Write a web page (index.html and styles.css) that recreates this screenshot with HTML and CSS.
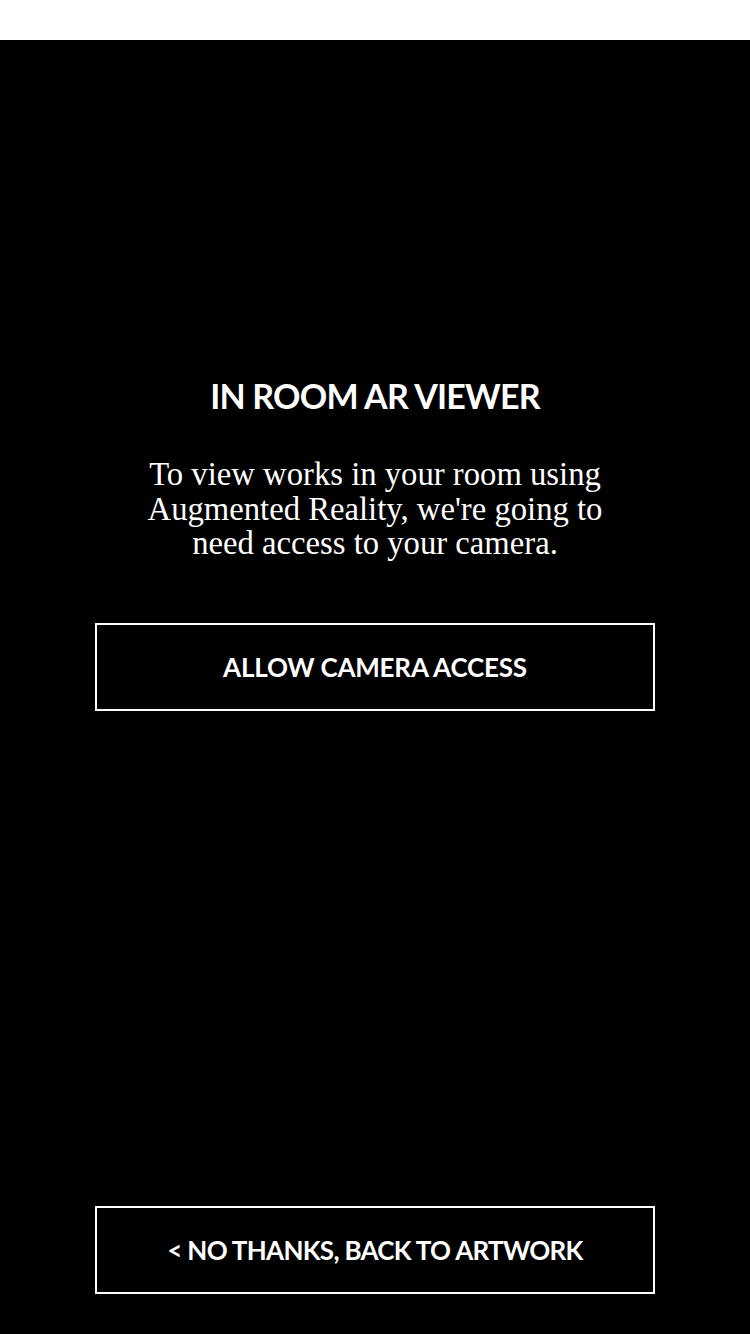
FILE: index.html
```html
<!DOCTYPE html>
<html lang="en">
<head>
<meta charset="utf-8">
<title>In Room AR Viewer</title>
<link rel="stylesheet" href="styles.css">
</head>
<body>
<div class="status-bar"></div>
<main class="screen">
  <section class="content">
    <h1 class="title">IN ROOM AR VIEWER</h1>
    <p class="desc">To view works in your room using Augmented Reality, we're going to need access to your camera.</p>
    <button class="btn btn-primary" type="button">ALLOW CAMERA ACCESS</button>
  </section>
  <footer class="footer">
    <button class="btn btn-back" type="button">&lt; NO THANKS, BACK TO ARTWORK</button>
  </footer>
</main>
</body>
</html>
```

FILE: styles.css
```css
html, body {
  margin: 0;
  padding: 0;
  background: #000;
}
body {
  width: 750px;
  height: 1334px;
  display: flex;
  flex-direction: column;
  overflow: hidden;
}
.status-bar {
  height: 40px;
  background: #fff;
  flex: none;
}
.screen {
  flex: 1;
  display: flex;
  flex-direction: column;
  padding: 0 95px 40px;
  color: #fff;
}
.content {
  flex: 1;
  display: flex;
  flex-direction: column;
  align-items: center;
  padding-top: 334px;
}
.title {
  margin: 0;
  font-family: "Lato", "Liberation Sans", sans-serif;
  font-weight: 700;
  font-size: 34px;
  line-height: 44px;
  letter-spacing: -0.8px;
  text-align: center;
}
.desc {
  margin: 39px 0 0;
  width: 490px;
  font-family: "Liberation Serif", serif;
  font-size: 32.7px;
  line-height: 34.5px;
  text-align: center;
}
.btn {
  display: block;
  width: 100%;
  height: 88px;
  box-sizing: border-box;
  border: 2px solid #fff;
  background: #000;
  color: #fff;
  font-family: "Lato", "Liberation Sans", sans-serif;
  font-weight: 700;
  font-size: 26px;
  letter-spacing: -0.2px;
  padding: 0;
  text-align: center;
}
.btn-back {
  letter-spacing: -0.7px;
}
.btn-primary {
  margin-top: 62px;
}
```
